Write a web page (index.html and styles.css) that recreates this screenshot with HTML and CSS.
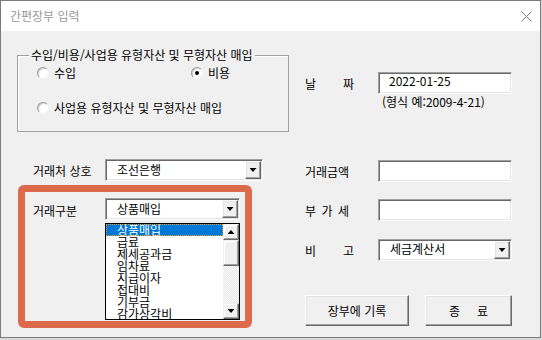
FILE: index.html
```html
<!DOCTYPE html>
<html lang="ko">
<head>
    <meta charset="UTF-8">
    <title>간편장부 입력</title>
    <link rel="stylesheet" href="styles.css">
</head>
<body>
    <div class="window">
        <div class="titlebar">
            <span class="title">간편장부 입력</span>
            <svg class="close" width="11" height="11" viewBox="0 0 11 11">
                <path d="M0.5 0.5 L10.5 10.5 M10.5 0.5 L0.5 10.5" stroke="#808080" stroke-width="1" fill="none"/>
            </svg>
        </div>

        <div class="content">
            <div class="col-left">
                <div class="group">
                    <span class="legend">수입/비용/사업용 유형자산 및 무형자산 매입</span>
                    <div class="radio-row">
                        <span class="opt first"><span class="radio"></span>수입</span>
                        <span class="opt"><span class="radio checked"></span>비용</span>
                    </div>
                    <div class="radio-row">
                        <span class="opt"><span class="radio"></span>사업용 유형자산 및 무형자산 매입</span>
                    </div>
                </div>

                <div class="field vendor">
                    <span class="lbl">거래처 상호</span>
                    <div class="box combo vendor-combo">
                        <span class="val">조선은행</span>
                        <span class="drop"><i class="tri down"></i></span>
                    </div>
                </div>

                <div class="highlight">
                    <div class="field kind">
                        <span class="lbl">거래구분</span>
                        <div class="stack">
                            <div class="box combo kind-combo">
                                <span class="val">상품매입</span>
                                <span class="drop"><i class="tri down"></i></span>
                            </div>
                            <div class="listbox">
                                <div class="items">
                                    <div class="item sel">상품매입</div>
                                    <div class="item">급료</div>
                                    <div class="item">제세공과금</div>
                                    <div class="item">임차료</div>
                                    <div class="item">지급이자</div>
                                    <div class="item">접대비</div>
                                    <div class="item">기부금</div>
                                    <div class="item">감가상각비</div>
                                </div>
                                <div class="scroll">
                                    <span class="sb-btn"><i class="tri up"></i></span>
                                    <span class="sb-thumb"></span>
                                    <span class="sb-track"></span>
                                    <span class="sb-btn"><i class="tri down"></i></span>
                                </div>
                            </div>
                        </div>
                    </div>
                </div>
            </div>

            <div class="col-right">
                <div class="field date-row">
                    <span class="lbl"><span class="spread"><span>날</span><span>짜</span></span></span>
                    <div class="box input"><span class="val">2022-01-25</span></div>
                </div>
                <div class="hint">(형식 예:2009-4-21)</div>

                <div class="field amount-row">
                    <span class="lbl">거래금액</span>
                    <div class="box input"></div>
                </div>
                <div class="field vat-row">
                    <span class="lbl"><span class="spread narrow"><span>부</span><span>가</span><span>세</span></span></span>
                    <div class="box input"></div>
                </div>
                <div class="field note-row">
                    <span class="lbl"><span class="spread"><span>비</span><span>고</span></span></span>
                    <div class="box combo">
                        <span class="val">세금계산서</span>
                        <span class="drop"><i class="tri down"></i></span>
                    </div>
                </div>

                <div class="buttons">
                    <button class="btn save">장부에 기록</button>
                    <button class="btn quit"><span class="gap">종</span>료</button>
                </div>
            </div>
        </div>
    </div>
</body>
</html>
```

FILE: styles.css
```css
* {
    box-sizing: border-box;
}
html, body {
    margin: 0;
}
body {
    width: 542px;
    height: 340px;
    overflow: hidden;
    background: #d9d9d9;
    font-family: "Noto Sans CJK KR", "Noto Sans", sans-serif;
    font-size: 12px;
    line-height: 16px;
    color: #000;
}
.window {
    width: 541px;
    height: 338px;
    border: 1px solid #7a7a7a;
    background: #f0f0f0;
    display: flex;
    flex-direction: column;
}
.titlebar {
    height: 30px;
    flex: none;
    background: #fff;
    display: flex;
    align-items: center;
    justify-content: space-between;
    padding: 0 8px 0 9px;
}
.title {
    color: #9a9a9a;
}
.content {
    flex: 1;
    display: flex;
}

/* left column */
.col-left {
    width: 288px;
    padding-left: 16px;
}
.group {
    position: relative;
    width: 272px;
    height: 77px;
    margin-top: 24px;
    border: 1px solid #a0a0a0;
    box-shadow: inset 1px 1px 0 #fff;
    padding: 9px 0 0 19px;
}
.legend {
    position: absolute;
    left: 11px;
    top: -9px;
    padding: 0 2px;
    background: #f0f0f0;
}
.radio-row {
    display: flex;
    height: 16px;
}
.radio-row + .radio-row {
    margin-top: 19px;
}
.opt {
    display: flex;
    align-items: center;
}
.opt.first {
    width: 154px;
}
.radio {
    position: relative;
    width: 12px;
    height: 12px;
    margin-right: 5px;
    border-radius: 50%;
    background: #fff;
    border: 1px solid;
    border-color: #9a9a9a #f4f4f4 #f4f4f4 #9a9a9a;
    box-shadow: inset 1px 1px 0 #d0d0d0;
}
.radio.checked::after {
    content: "";
    position: absolute;
    left: 3px;
    top: 3px;
    width: 4px;
    height: 4px;
    border-radius: 50%;
    background: #000;
}

.field {
    display: flex;
    align-items: center;
}
.lbl {
    width: 72px;
    flex: none;
    padding-top: 2px;
}
.vendor {
    margin-top: 27px;
    margin-left: 16px;
}
.vendor-combo {
    width: 158px;
    height: 23px;
}

.highlight {
    width: 234px;
    height: 143px;
    margin-top: 4px;
    margin-left: 1px;
    border: 7px solid #dd6a4b;
    border-radius: 6px;
    padding: 6px 0 0 8px;
}
.kind {
    align-items: flex-start;
}
.kind .lbl {
    line-height: 22px;
}
.kind-combo {
    width: 135px;
}

/* sunken boxes */
.box {
    height: 22px;
    background: #fff;
    border: 1px solid;
    border-color: #a0a0a0 #fff #fff #a0a0a0;
    box-shadow: inset 1px 1px 0 #696969, inset -1px -1px 0 #e3e3e3;
}
.input {
    width: 134px;
    padding: 1px 0 0 10px;
}
.combo {
    display: flex;
    align-items: center;
    padding: 1px;
}
.combo .val {
    flex: 1;
    padding-left: 10px;
}
.drop {
    width: 16px;
    height: 18px;
    display: flex;
    align-items: center;
    justify-content: center;
    background: #f0f0f0;
    border: 1px solid;
    border-color: #fff #696969 #696969 #fff;
    box-shadow: inset -1px -1px 0 #a0a0a0, inset 1px 1px 0 #e3e3e3;
}
.tri {
    display: block;
    width: 7px;
    height: 4px;
    background: #000;
}
.tri.down {
    clip-path: polygon(0 0, 100% 0, 50% 100%);
}
.tri.up {
    clip-path: polygon(50% 0, 100% 100%, 0 100%);
}

/* list */
.listbox {
    width: 135px;
    height: 97px;
    margin-top: 3px;
    border: 1px solid #000;
    background: #fff;
    display: flex;
}
.items {
    flex: 1;
}
.item {
    height: 12px;
    line-height: 12px;
    padding-left: 11px;
    overflow: hidden;
    white-space: nowrap;
}
.item.sel {
    background: #0078d7;
    color: #fff;
    outline: 1px dotted #f09a20;
    outline-offset: -1px;
}
.scroll {
    width: 16px;
    display: flex;
    flex-direction: column;
}
.sb-btn, .sb-thumb {
    display: flex;
    align-items: center;
    justify-content: center;
    background: #f0f0f0;
    border: 1px solid;
    border-color: #f0f0f0 #696969 #696969 #f0f0f0;
    box-shadow: inset -1px -1px 0 #a0a0a0, inset 1px 1px 0 #fff;
}
.sb-btn {
    height: 16px;
}
.sb-thumb {
    height: 26px;
}
.sb-track {
    flex: 1;
    background: repeating-conic-gradient(#fff 0 25%, #e4e4e4 0 50%) 0 0 / 2px 2px;
}

/* right column */
.col-right {
    flex: 1;
    padding-left: 16px;
}
.col-right .lbl {
    width: 73px;
}
.spread {
    display: flex;
    justify-content: space-between;
    width: 49px;
}
.spread.narrow {
    width: 44px;
}
.date-row {
    margin-top: 41px;
}
.date-row .input {
    padding-top: 0;
}
.hint {
    height: 16px;
    margin-left: 77px;
}
.amount-row {
    margin-top: 50px;
}
.vat-row {
    margin-top: 17px;
}
.note-row {
    margin-top: 18px;
}
.note-row .combo {
    width: 134px;
}
.note-row .val {
    padding-left: 10px;
    margin-top: -3px;
}

.buttons {
    display: flex;
    gap: 16px;
    margin-top: 34px;
}
.btn {
    height: 31px;
    padding: 0;
    font: inherit;
    color: #000;
    background: #f0f0f0;
    border: 1px solid;
    border-color: #fff #696969 #696969 #fff;
    box-shadow: inset -1px -1px 0 #a0a0a0, inset 1px 1px 0 #e3e3e3;
}
.save {
    width: 104px;
}
.quit {
    width: 87px;
}
.gap {
    margin-right: 17px;
}
```
